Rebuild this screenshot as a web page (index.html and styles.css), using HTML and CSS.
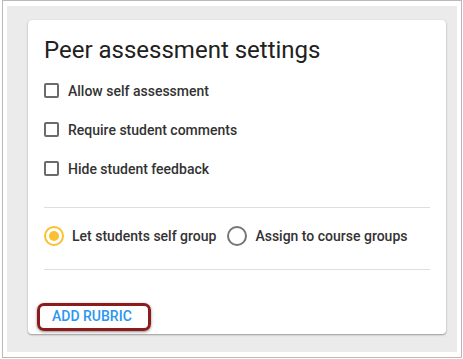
FILE: index.html
```html
<!DOCTYPE html>
<html lang="en">
<head>
<meta charset="utf-8">
<title>Peer assessment settings</title>
<link rel="stylesheet" href="styles.css">
</head>
<body>
<div class="frame">
  <div class="backdrop">
    <section class="card">
      <h1 class="title">Peer assessment settings</h1>
      <div class="checks">
        <label class="check"><span class="box"></span><span>Allow self assessment</span></label>
        <label class="check"><span class="box"></span><span>Require student comments</span></label>
        <label class="check"><span class="box"></span><span>Hide student feedback</span></label>
      </div>
      <div class="radios">
        <label class="radio"><span class="circle on"></span><span>Let students self group</span></label>
        <label class="radio"><span class="circle"></span><span>Assign to course groups</span></label>
      </div>
      <div class="actions">
        <button class="text-btn" type="button">ADD RUBRIC</button>
      </div>
    </section>
  </div>
</div>
</body>
</html>
```

FILE: styles.css
```css
* { box-sizing: border-box; }
html, body { margin: 0; padding: 0; background: #ffffff; }
body { font-family: Roboto, "Liberation Sans", Arial, sans-serif; }

.frame {
  margin-left: 2px;
  width: 460px;
  height: 358px;
  border: 1px solid #b9b9b9;
  padding: 5px 4px 4px 4px;
  background: #ffffff;
}

.backdrop {
  background: #ebebeb;
  height: 346px;
  padding: 14px 10px 0 21px;
}

.card {
  background: #ffffff;
  width: 418px;
  height: 314px;
  border-radius: 4px;
  box-shadow: 0 1px 2px rgba(0,0,0,0.35), 0 0 1px rgba(0,0,0,0.15);
  padding: 16px 16px 0 16px;
}

.title {
  margin: 0;
  font-size: 24px;
  line-height: 28px;
  font-weight: 400;
  color: #212121;
}

.checks {
  margin-top: 7px;
  padding-bottom: 19px;
  border-bottom: 1px solid #dedede;
}

.check {
  display: flex;
  align-items: center;
  height: 39px;
  gap: 9px;
  font-size: 14px;
  font-weight: 500;
  color: #333333;
}

.box {
  width: 15px;
  height: 15px;
  border: 2px solid #6b6b6b;
  border-radius: 2px;
  flex: none;
}

.radios {
  display: flex;
  align-items: center;
  gap: 11px;
  padding: 18px 0 23px 0;
  border-bottom: 1px solid #dedede;
}

.radio {
  display: flex;
  align-items: center;
  gap: 8px;
  height: 20px;
  font-size: 14px;
  font-weight: 500;
  color: #333333;
}

.circle {
  width: 20px;
  height: 20px;
  border-radius: 50%;
  border: 2px solid #757575;
  flex: none;
  display: flex;
  align-items: center;
  justify-content: center;
}

.circle.on { border-color: #fbc02d; }
.circle.on::after {
  content: "";
  width: 10px;
  height: 10px;
  border-radius: 50%;
  background: #fbc02d;
}

.actions { margin-top: 30px; }

.text-btn {
  position: relative;
  display: inline-block;
  border: 0;
  background: transparent;
  padding: 6px 8px;
  font-family: Roboto, "Liberation Sans", Arial, sans-serif;
  font-size: 14px;
  line-height: 20px;
  font-weight: 500;
  color: #2a96ee;
}

.text-btn::after {
  content: "";
  position: absolute;
  left: -7px;
  top: 3px;
  right: -11px;
  bottom: 1px;
  border: 3px solid #8c1b1b;
  border-radius: 7px;
  box-shadow: 0 1px 3px rgba(0,0,0,0.45);
}
```
